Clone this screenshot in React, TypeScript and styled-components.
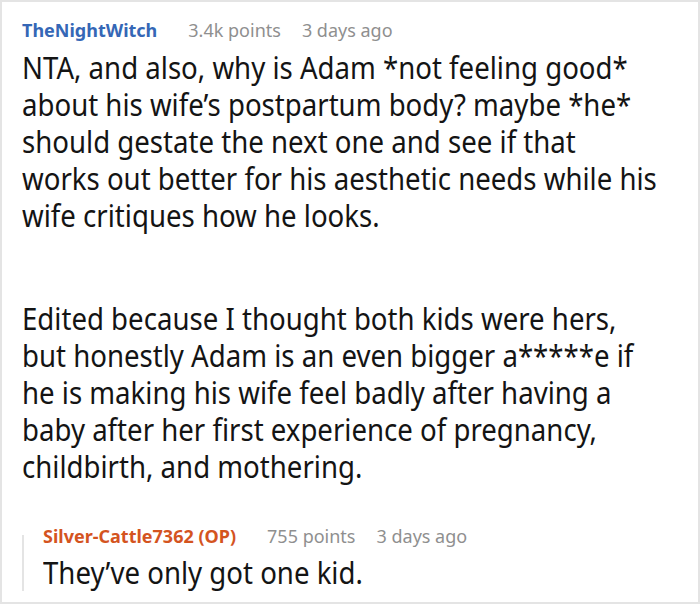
import styled, { createGlobalStyle } from "styled-components";

const GlobalStyle = createGlobalStyle`
  html, body {
    margin: 0;
    padding: 0;
    background: #fff;
  }
  body {
    font-family: "Noto Sans", "Open Sans", sans-serif;
  }
`;

const Card = styled.div`
  box-sizing: border-box;
  width: 700px;
  height: 604px;
  border: 2px solid #e4e4e4;
  background: #fff;
  padding: 14px 20px 0 20px;
  overflow: hidden;
`;

const Meta = styled.div`
  display: flex;
  align-items: baseline;
  gap: 21px;
  height: 28px;
  font-size: 18px;
  line-height: 28px;
  white-space: nowrap;
`;

const Author = styled.span<{ $op?: boolean }>`
  font-weight: 700;
  color: ${(p) => (p.$op ? "#d4541f" : "#3567b6")};
  margin-right: 10px;
`;

const Info = styled.span`
  color: #8f8f8f;
`;

// the comment font is a semi-condensed cut; squeeze Noto Sans to match
const Body = styled.div`
  margin-top: 5px;
  font-size: 30px;
  line-height: 37px;
  color: #141414;
  white-space: nowrap;
  transform: scaleX(0.92);
  transform-origin: 0 0;
`;

const Para = styled.p`
  margin: 0 0 66px 0;
  &:last-child {
    margin-bottom: 0;
  }
`;

const Reply = styled.div`
  display: flex;
  margin-top: 37px;
  padding-bottom: 5px;
`;

const Rail = styled.div`
  flex: 0 0 2px;
  margin-top: 13px;
  background: #e4e4e4;
`;

const ReplyContent = styled.div`
  flex: 1;
  padding-left: 19px;

  ${Body} {
    margin-top: 4px;
  }
`;

function Comment() {
  return (
    <Card>
      <Meta>
        <Author>TheNightWitch</Author>
        <Info>3.4k points</Info>
        <Info>3 days ago</Info>
      </Meta>
      <Body>
        <Para>
          NTA, and also, why is Adam *not feeling good*
          <br />
          about his wife’s postpartum body? maybe *he*
          <br />
          should gestate the next one and see if that
          <br />
          works out better for his aesthetic needs while his
          <br />
          wife critiques how he looks.
        </Para>
        <Para>
          Edited because I thought both kids were hers,
          <br />
          but honestly Adam is an even bigger a*****e if
          <br />
          he is making his wife feel badly after having a
          <br />
          baby after her first experience of pregnancy,
          <br />
          childbirth, and mothering.
        </Para>
      </Body>
      <Reply>
        <Rail />
        <ReplyContent>
          <Meta>
            <Author $op>Silver-Cattle7362 (OP)</Author>
            <Info>755 points</Info>
            <Info>3 days ago</Info>
          </Meta>
          <Body>
            <Para>They’ve only got one kid.</Para>
          </Body>
        </ReplyContent>
      </Reply>
    </Card>
  );
}

export default function App() {
  return (
    <>
      <GlobalStyle />
      <Comment />
    </>
  );
}
